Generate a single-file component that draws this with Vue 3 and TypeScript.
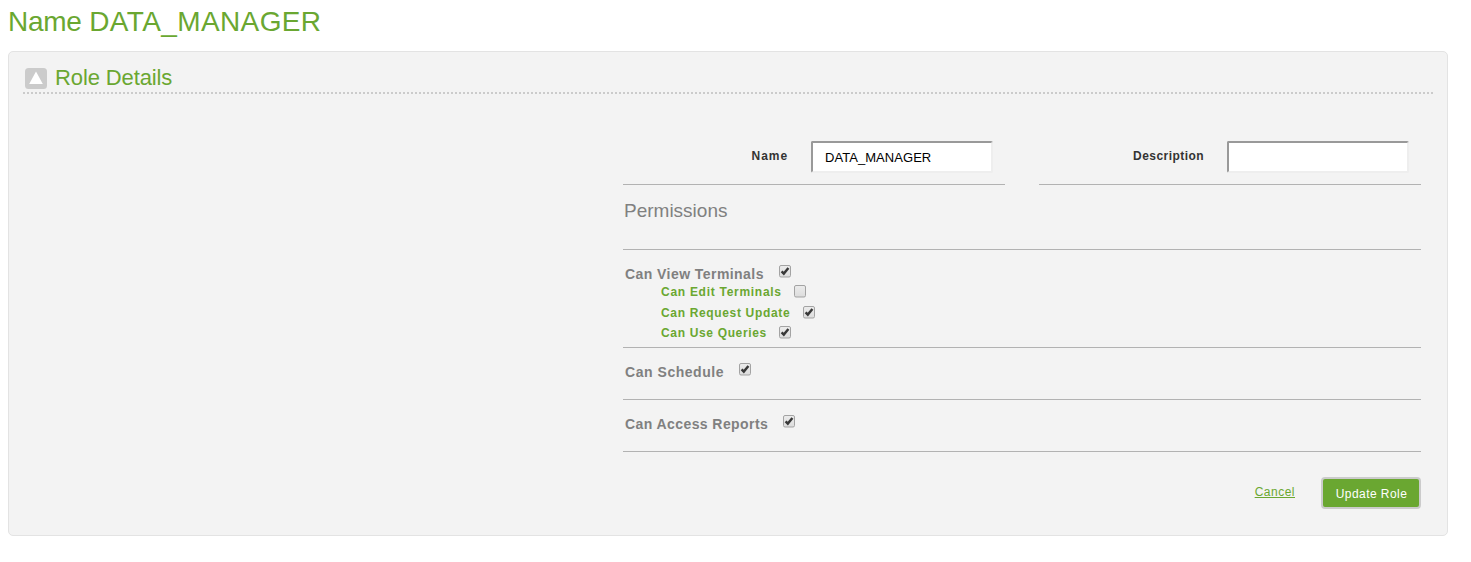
<script setup lang="ts">
import { ref } from 'vue'

interface Permission {
  label: string
  checked: boolean
  width: number
  spacing: number
}

interface Group extends Permission {
  height: number
  children: Permission[]
}

const name = ref('DATA_MANAGER')
const description = ref('')

const groups = ref<Group[]>([
  {
    label: 'Can View Terminals', checked: true, width: 139, spacing: 0.44, height: 98,
    children: [
      { label: 'Can Edit Terminals', checked: false, width: 121, spacing: 0.72 },
      { label: 'Can Request Update', checked: true, width: 130, spacing: 0.66 },
      { label: 'Can Use Queries', checked: true, width: 106, spacing: 0.66 },
    ],
  },
  { label: 'Can Schedule', checked: true, width: 99, spacing: 0.54, height: 52, children: [] },
  { label: 'Can Access Reports', checked: true, width: 143, spacing: 0.42, height: 52, children: [] },
])
</script>

<template>
  <main class="page">
    <h1 class="title">Name <span>DATA_MANAGER</span></h1>
    <section class="panel">
      <header class="panel-head">
        <svg class="toggle" width="22" height="21" viewBox="0 0 22 21">
          <rect width="22" height="21" rx="3.5" fill="#cbcbcb" />
          <path d="M11 3.5 17.8 16H4.2z" fill="#fff" />
        </svg>
        <h2>Role Details</h2>
      </header>
      <form class="form" @submit.prevent>
        <svg width="0" height="0" class="defs">
          <linearGradient id="boxFill" x1="0" y1="0" x2="0" y2="1">
            <stop offset="0" stop-color="#ececec" />
            <stop offset="1" stop-color="#dcdcdc" />
          </linearGradient>
        </svg>
        <div class="fields">
          <label class="field"><span class="wide">Name</span><input v-model="name" type="text" /></label>
          <label class="field"><span>Description</span><input v-model="description" type="text" /></label>
        </div>
        <h3 class="permissions">Permissions</h3>
        <div v-for="g in groups" :key="g.label" class="group" :style="{ height: g.height + 'px' }">
          <div class="parent" @click="g.checked = !g.checked">
            <span class="text" :style="{ width: g.width + 'px', letterSpacing: g.spacing + 'px' }">{{ g.label }}</span>
            <svg class="box" width="12" height="13" viewBox="0 0 12 13">
              <rect x=".5" y=".5" width="11" height="11.5" rx="1.5" fill="url(#boxFill)" stroke="#a3a3a3" />
              <path v-if="g.checked" d="M2.6 6.4 4.8 8.6 9.4 3" fill="none" stroke="#383838" stroke-width="2.4" />
            </svg>
          </div>
          <div v-for="c in g.children" :key="c.label" class="child" @click="c.checked = !c.checked">
            <span class="text" :style="{ width: c.width + 'px', letterSpacing: c.spacing + 'px' }">{{ c.label }}</span>
            <svg class="box" width="12" height="13" viewBox="0 0 12 13">
              <rect x=".5" y=".5" width="11" height="11.5" rx="1.5" fill="url(#boxFill)" stroke="#a3a3a3" />
              <path v-if="c.checked" d="M2.6 6.4 4.8 8.6 9.4 3" fill="none" stroke="#383838" stroke-width="2.4" />
            </svg>
          </div>
        </div>
        <footer class="actions">
          <a href="#" class="cancel">Cancel</a>
          <button type="submit">Update Role</button>
        </footer>
      </form>
    </section>
  </main>
</template>

<style>
body { margin: 0; background: #fff; }
</style>

<style scoped>
* { box-sizing: border-box; }
.page {
  width: 1448px;
  height: 562px;
  padding-left: 8px;
  font-family: "Liberation Sans", Arial, sans-serif;
  font-size: 12px;
}
h1, h2, h3 { margin: 0; font-weight: normal; }
.title {
  height: 51px;
  padding-top: 6px;
  font-size: 28px;
  line-height: 32px;
  letter-spacing: -.25px;
  color: #6aa731;
}
.title span { letter-spacing: .38px; }
.panel {
  height: 485px;
  padding: 16px 14px 0;
  background: #f3f3f3;
  border: 1px solid #e3e3e3;
  border-radius: 5px;
}
.panel-head {
  display: flex;
  height: 26px;
  padding-left: 2px;
  border-bottom: 2px dotted #cbcbcb;
}
.toggle { flex: none; }
.defs { display: block; }
h2 {
  margin: -3px 0 0 8px;
  font-size: 22px;
  line-height: 26px;
  letter-spacing: -.12px;
  color: #6aa731;
}
.form { width: 798px; margin: 47px 0 0 600px; }
.fields { display: flex; gap: 34px; }
.field {
  display: flex;
  justify-content: flex-end;
  width: 382px;
  height: 44px;
  padding-right: 12px;
  border-bottom: 1px solid #b2b2b2;
}
.field span {
  margin: 7px 23px 0 0;
  font-weight: bold;
  line-height: 16px;
  letter-spacing: .45px;
  color: #333;
}
.field .wide { letter-spacing: .95px; }
.field input {
  width: 182px;
  height: 32px;
  padding: 1px 12px 0;
  font: 13px "Liberation Sans", Arial, sans-serif;
  letter-spacing: .05px;
  color: #000;
  background: #fff;
  border: 2px solid;
  border-color: #999 #eee #eee #999;
  border-radius: 2px;
  outline: none;
}
.permissions {
  height: 65px;
  padding: 14px 0 0 1px;
  font-size: 19px;
  line-height: 24px;
  color: #808080;
  border-bottom: 1px solid #b2b2b2;
}
.group {
  padding: 15px 0 0 2px;
  border-bottom: 1px solid #b2b2b2;
  font-weight: bold;
}
.parent {
  display: flex;
  gap: 15px;
  height: 17px;
  font-size: 14px;
  line-height: 19px;
  color: #808080;
}
.child {
  display: flex;
  gap: 12px;
  height: 20.5px;
  margin-left: 36px;
  line-height: 20px;
  color: #6aa731;
}
.text { flex: none; white-space: nowrap; }
.box { flex: none; }
.child .box { margin-top: 3px; }
.actions {
  display: flex;
  justify-content: flex-end;
  padding-top: 25px;
  letter-spacing: .5px;
}
.cancel { margin: 7px 26px 0 0; line-height: 16px; color: #6aa731; }
button {
  width: 100px;
  height: 32px;
  padding: 2px 0 0 1px;
  font: 12px "Liberation Sans", Arial, sans-serif;
  letter-spacing: .45px;
  color: #fff;
  background: #6aa731;
  border: 2px solid #cbcbcb;
  border-radius: 4px;
}
</style>
